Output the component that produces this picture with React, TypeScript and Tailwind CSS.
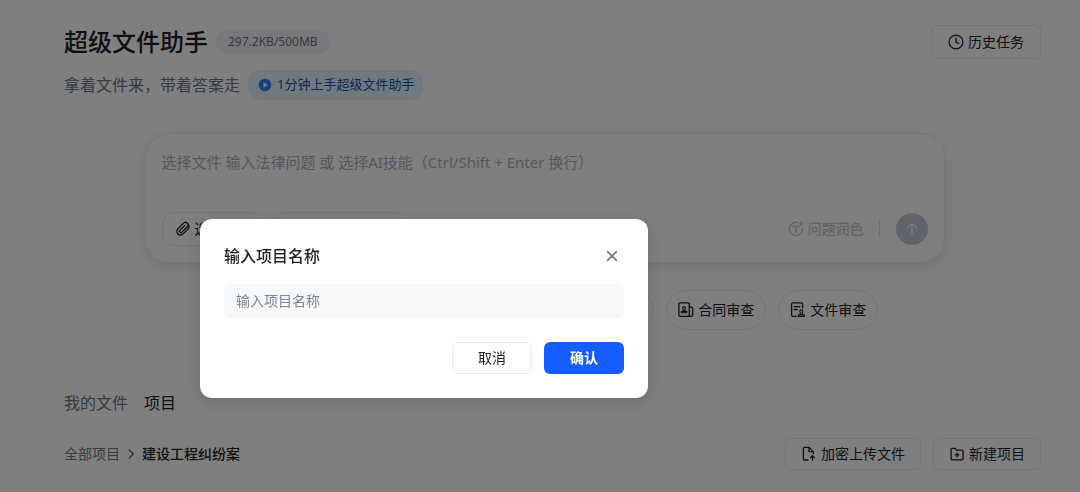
import { useState } from 'react'
import type { ReactNode } from 'react'

type IconProps = { children: ReactNode; className?: string }

function Icon({ children, className = 'size-4' }: IconProps) {
  return (
    <svg
      viewBox="0 0 16 16"
      fill="none"
      stroke="currentColor"
      strokeWidth="1.3"
      strokeLinecap="round"
      strokeLinejoin="round"
      className={`${className} shrink-0`}
      aria-hidden="true"
    >
      {children}
    </svg>
  )
}

const ClockIcon = () => (
  <Icon>
    <circle cx="8" cy="8" r="6.9" />
    <path d="M8 4v4.2l2.6 1.3" />
  </Icon>
)

const ClipIcon = () => (
  <Icon>
    <path d="M13.4 7.6 8.1 12.9a3.6 3.6 0 0 1-5.2-5.1l5.7-5.7a2.6 2.6 0 0 1 3.7 3.7l-5.5 5.5a1.3 1.3 0 0 1-1.9-1.9l4.8-4.8" />
    <path d="M13.4 7.6a3.6 3.6 0 0 0-1-5.1" />
  </Icon>
)

const ContractIcon = () => (
  <Icon>
    <path d="M11.3 14.4H2a1.1 1.1 0 0 1-1.1-1.1V2A1.1 1.1 0 0 1 2 .9h8.2A1.1 1.1 0 0 1 11.3 2z" />
    <path d="M11.3 5.2h2.4a1 1 0 0 1 1 1v6.5a1.7 1.7 0 0 1-3.4 0" />
    <path d="M3.4 10.8h5.4V9.4H3.4zM5.2 9.2l.2-2a1.4 1.4 0 1 1 1.4 0l.2 2" strokeWidth="1.1" />
  </Icon>
)

const DocReviewIcon = () => (
  <Icon>
    <path d="M12.7 6V2.1A1.2 1.2 0 0 0 11.5.9H2.9a1.3 1.3 0 0 0-1.3 1.3v10.9a1.3 1.3 0 0 0 1.3 1.3h3.4" />
    <path d="M4.2 4.6h5.9M4.2 7.5h3" />
    <path d="M8.3 14.5h6v-1.6h-6zM10 12.7l.4-2.2a1.5 1.5 0 1 1 1.8 0l.4 2.2" strokeWidth="1.1" />
  </Icon>
)

const UploadIcon = () => (
  <Icon>
    <path d="M7 14H3.6a1.2 1.2 0 0 1-1.2-1.2V2.6a1.2 1.2 0 0 1 1.2-1.2H8l4.4 4.2v2" />
    <path d="M8 1.6v4h4.2M11.4 14V9.8M9.5 11.5l1.9-1.9 1.9 1.9" />
  </Icon>
)

const FolderPlusIcon = () => (
  <Icon>
    <path d="M2.1 12.8V3.3a1 1 0 0 1 1-1h3l1.6 1.9h5.4a1 1 0 0 1 1 1v7.6a1 1 0 0 1-1 1h-10a1 1 0 0 1-1-1z" />
    <path d="M8.1 6.9v3.8M6.2 8.8H10" />
  </Icon>
)

const PolishIcon = () => (
  <Icon>
    <path d="M9.6 1.7A6.5 6.5 0 1 0 14.3 6.8" />
    <path d="M5.2 6.2V5.2h5.4v1M7.9 5.2v5.7M6.6 10.9h2.6" />
    <path d="M13 .6l.6 1.5 1.5.6-1.5.6-.6 1.5-.6-1.5-1.5-.6 1.5-.6z" fill="currentColor" strokeWidth="0.6" />
  </Icon>
)

const SKILLS = [
  { name: '法律检索', icon: <DocReviewIcon /> },
  { name: '案例分析', icon: <ContractIcon /> },
  { name: 'Word转换', icon: <DocReviewIcon /> },
  { name: '文书起草', icon: <ContractIcon /> },
  { name: '合同审查', icon: <ContractIcon /> },
  { name: '文件审查', icon: <DocReviewIcon /> },
]

function OutlineButton({ icon, label, className }: { icon: ReactNode; label: string; className: string }) {
  return (
    <button
      className={`flex items-center gap-1 rounded-md border border-[#e8eaee] text-sm text-[#1d2129] ${className}`}
    >
      {icon}
      {label}
    </button>
  )
}

function Header() {
  return (
    <header className="flex items-start justify-between pl-4">
      <div>
        <div className="flex h-[34px] items-center gap-2">
          <h1 className="text-2xl font-medium text-[#1d2129]">超级文件助手</h1>
          <span className="rounded-full bg-[#f2f3fa] px-3 text-xs leading-6 text-[#6b7280]">
            297.2KB/500MB
          </span>
        </div>
        <div className="mt-[11px] flex items-center gap-2">
          <p className="text-base text-[#6b7785]">拿着文件来，带着答案走</p>
          <a
            href="#guide"
            className="flex h-[30px] items-center gap-1 rounded-xl bg-[#e1f3fc] px-[9px] text-[13px] text-[#1d4fa8]"
          >
            <svg viewBox="0 0 16 16" className="size-4" aria-hidden="true">
              <circle cx="8" cy="8" r="6.2" fill="#2b7bff" />
              <path d="M6.4 5.2v5.6L10.8 8z" fill="#fff" />
            </svg>
            1分钟上手超级文件助手
          </a>
        </div>
      </div>
      <OutlineButton icon={<ClockIcon />} label="历史任务" className="h-[34px] px-4" />
    </header>
  )
}

function Composer() {
  return (
    <section className="mx-auto mt-[33px] max-w-[800px] rounded-3xl border border-[#e8eaee] p-4 shadow-[0_4px_12px_rgba(0,0,0,0.1)]">
      <textarea
        aria-label="法律问题"
        placeholder="选择文件 输入法律问题 或 选择AI技能（Ctrl/Shift + Enter 换行）"
        className="block h-[62px] w-full resize-none text-[15px] leading-6 outline-none placeholder:text-[#a9aeb8]"
      />
      <div className="flex items-center justify-between">
        <div className="flex gap-2">
          <button className="flex h-[34px] w-[102px] items-center gap-1 rounded-xl border border-[#e8eaee] px-3 text-sm text-[#1d2129]">
            <ClipIcon />
            选择文件
          </button>
          <button className="flex h-[34px] w-[136px] items-center justify-center gap-1 rounded-xl border border-[#e8eaee] text-sm text-[#1d2129]">
            选择AI技能
          </button>
        </div>
        <div className="flex items-center">
          <button className="flex items-center gap-1 text-sm font-medium text-[#c3c7cf]">
            <PolishIcon />
            问题润色
          </button>
          <span className="mr-4 ml-[15px] h-4 w-px bg-[#d5d8de]" />
          <button
            aria-label="发送"
            className="flex size-8 items-center justify-center rounded-full bg-[#c3c7d4] text-[#f2f3f5]"
          >
            <Icon>
              <path d="M8 14V2.5M3 7.3l5-5 5 5" />
            </Icon>
          </button>
        </div>
      </div>
    </section>
  )
}

function Skills() {
  return (
    <div className="mt-[27px] flex justify-center gap-3">
      {SKILLS.map((skill) => (
        <button
          key={skill.name}
          className="flex h-10 shrink-0 items-center gap-1 rounded-full border border-[#e8eaee] px-[11px] text-sm text-[#1d2129]"
        >
          {skill.icon}
          {skill.name}
        </button>
      ))}
    </div>
  )
}

function Projects() {
  return (
    <section className="mt-[61px] pl-4">
      <div className="flex gap-4 text-base">
        <button className="text-[#6b7785]">我的文件</button>
        <button className="text-[#1d2129]">项目</button>
      </div>
      <div className="mt-[23px] flex items-center justify-between">
        <nav className="flex items-center gap-[5px] text-sm">
          <a href="#projects" className="text-[#6b7785]">
            全部项目
          </a>
          <Icon className="size-3 text-[#4e5969]">
            <path d="m5.5 2.5 5.5 5.5-5.5 5.5" strokeWidth="1.6" />
          </Icon>
          <span className="font-medium text-[#1d2129]">建设工程纠纷案</span>
        </nav>
        <div className="flex gap-3">
          <OutlineButton icon={<UploadIcon />} label="加密上传文件" className="h-8 px-[15px]" />
          <OutlineButton icon={<FolderPlusIcon />} label="新建项目" className="h-8 px-[15px]" />
        </div>
      </div>
    </section>
  )
}

function ProjectDialog({ onClose }: { onClose: () => void }) {
  const [name, setName] = useState('')

  return (
    <div className="fixed inset-0 bg-black/50">
      <div
        role="dialog"
        aria-modal="true"
        aria-labelledby="dialog-title"
        className="absolute top-[219px] left-[200px] w-[448px] rounded-xl bg-white p-6 pt-[25px] shadow-[0_4px_16px_rgba(0,0,0,0.15)]"
      >
        <div className="flex items-center justify-between">
          <h2 id="dialog-title" className="text-base font-medium text-[#1d2129]">
            输入项目名称
          </h2>
          <button aria-label="关闭" onClick={onClose} className="p-1 text-[#6b7785]">
            <Icon>
              <path d="m3.6 3.6 8.8 8.8M12.4 3.6l-8.8 8.8" strokeWidth="1.6" />
            </Icon>
          </button>
        </div>
        <input
          type="text"
          aria-labelledby="dialog-title"
          placeholder="输入项目名称"
          value={name}
          onChange={(e) => setName(e.target.value)}
          className="mt-4 block h-[34px] w-full rounded-md bg-[#f7f8fa] px-3 pb-0.5 text-sm text-[#1d2129] outline-none placeholder:text-[#7a8794]"
        />
        <div className="mt-6 flex justify-end gap-3">
          <button
            onClick={onClose}
            className="h-8 w-20 rounded-md border border-[#e8eaee] text-sm text-[#1d2129]"
          >
            取消
          </button>
          <button className="h-8 w-20 rounded-md bg-[#165dff] text-sm font-bold text-white">确认</button>
        </div>
      </div>
    </div>
  )
}

export default function App() {
  const [open, setOpen] = useState(true)

  return (
    <div className="min-h-screen bg-white pt-[25px] pr-[39px] pb-[22px] pl-12 font-['Noto_Sans','Noto_Sans_CJK_SC',sans-serif]">
      <Header />
      <Composer />
      <Skills />
      <Projects />
      {open && <ProjectDialog onClose={() => setOpen(false)} />}
    </div>
  )
}
